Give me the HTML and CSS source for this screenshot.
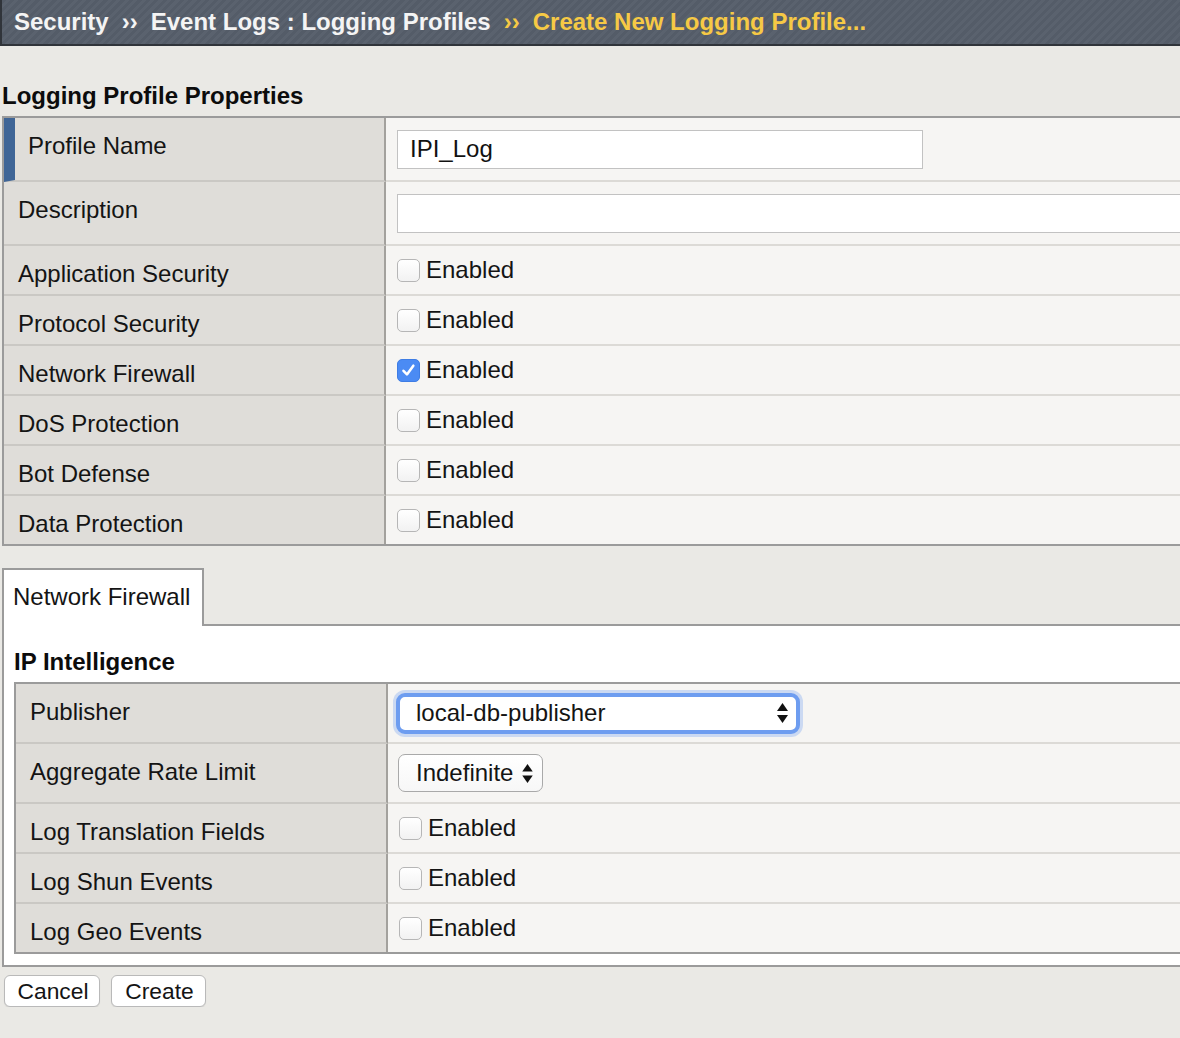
FILE: index.html
```html
<!DOCTYPE html>
<html>
<head>
<meta charset="utf-8">
<title>Create New Logging Profile</title>
<link rel="stylesheet" href="styles.css">
</head>
<body>
<div class="topbar">
  <span class="crumb">Security</span><span class="sep">››</span><span class="crumb">Event Logs : Logging Profiles</span><span class="sep cur">››</span><span class="crumb cur">Create New Logging Profile...</span>
</div>
<main class="content">
  <h2 class="section-title">Logging Profile Properties</h2>
  <div class="props main">
    <div class="row tall">
      <div class="label primary">Profile Name</div>
      <div class="value"><input class="text-input short" type="text" value="IPI_Log"></div>
    </div>
    <div class="row tall">
      <div class="label">Description</div>
      <div class="value"><input class="text-input long" type="text" value=""></div>
    </div>
    <div class="row">
      <div class="label">Application Security</div>
      <div class="value"><span class="opt"><span class="cb"></span>Enabled</span></div>
    </div>
    <div class="row">
      <div class="label">Protocol Security</div>
      <div class="value"><span class="opt"><span class="cb"></span>Enabled</span></div>
    </div>
    <div class="row">
      <div class="label">Network Firewall</div>
      <div class="value"><span class="opt"><span class="cb on"><svg viewBox="0 0 23 23" width="21" height="21"><path d="M6 11.8 L9.8 15.8 L16.8 6.2" fill="none" stroke="#fff" stroke-width="2.8" stroke-linecap="round" stroke-linejoin="round"/></svg></span>Enabled</span></div>
    </div>
    <div class="row">
      <div class="label">DoS Protection</div>
      <div class="value"><span class="opt"><span class="cb"></span>Enabled</span></div>
    </div>
    <div class="row">
      <div class="label">Bot Defense</div>
      <div class="value"><span class="opt"><span class="cb"></span>Enabled</span></div>
    </div>
    <div class="row">
      <div class="label">Data Protection</div>
      <div class="value"><span class="opt"><span class="cb"></span>Enabled</span></div>
    </div>
  </div>

  <div class="tabs">
    <div class="tab">Network Firewall</div>
    <div class="tab-fill"></div>
  </div>
  <div class="panel">
    <h3 class="sub-title">IP Intelligence</h3>
    <div class="props inner">
      <div class="row mid">
        <div class="label">Publisher</div>
        <div class="value">
          <div class="select focus"><span>local-db-publisher</span><svg class="arrows" viewBox="0 0 11 20" width="11" height="20"><polygon points="0,8 5.5,0 11,8" fill="#111"/><polygon points="0,12 11,12 5.5,20" fill="#111"/></svg></div>
        </div>
      </div>
      <div class="row mid">
        <div class="label">Aggregate Rate Limit</div>
        <div class="value">
          <div class="select plain"><span>Indefinite</span><svg class="arrows" viewBox="0 0 11 20" width="11" height="19"><polygon points="0,8 5.5,0 11,8" fill="#111"/><polygon points="0,12 11,12 5.5,20" fill="#111"/></svg></div>
        </div>
      </div>
      <div class="row">
        <div class="label">Log Translation Fields</div>
        <div class="value"><span class="opt"><span class="cb"></span>Enabled</span></div>
      </div>
      <div class="row">
        <div class="label">Log Shun Events</div>
        <div class="value"><span class="opt"><span class="cb"></span>Enabled</span></div>
      </div>
      <div class="row">
        <div class="label">Log Geo Events</div>
        <div class="value"><span class="opt"><span class="cb"></span>Enabled</span></div>
      </div>
    </div>
  </div>

  <div class="actions">
    <button class="btn cancel" type="button">Cancel</button>
    <button class="btn create" type="button">Create</button>
  </div>
</main>
</body>
</html>
```

FILE: styles.css
```css
* { box-sizing: border-box; }

html, body { margin: 0; padding: 0; }

body {
  background: #eae9e5;
  font-family: "Liberation Sans", Arial, sans-serif;
  font-size: 24px;
  line-height: 28px;
  color: #141414;
  overflow: hidden;
}

/* ---------- top breadcrumb bar ---------- */
.topbar {
  height: 46px;
  display: flex;
  align-items: center;
  padding-left: 12px;
  background: repeating-linear-gradient(135deg, #545c68 0 3px, #5a626e 3px 6px);
  border-left: 2px solid #30343a;
  border-bottom: 2px solid #30343a;
  color: #f4f4f4;
  font-weight: bold;
  white-space: nowrap;
}
.sep { margin: 0 13px; }
.cur { color: #f6c945; }

/* ---------- content ---------- */
.content { padding-left: 2px; }

.section-title {
  margin: 36px 0 6px;
  font-size: 24px;
  line-height: 28px;
  font-weight: bold;
  color: #0c0c0c;
}

.props {
  border-top: 2px solid #9b9b9b;
  border-left: 2px solid #9b9b9b;
  border-bottom: 2px solid #9b9b9b;
  width: 100%;
}

.row {
  display: grid;
  grid-template-columns: 382px minmax(0, 1fr);
  height: 50px;
}
.row.tall { height: 64px; }
.row.mid { height: 60px; }
.row:last-child { height: 48px; }

.label {
  background: #dfddd9;
  border-right: 2px solid #a3a19d;
  border-bottom: 2px solid #cac8c4;
  padding: 14px 0 0 14px;
  white-space: nowrap;
}
.label.primary {
  border-left: 11px solid #3f6596;
  padding-left: 13px;
}

.value {
  background: #f6f5f3;
  border-bottom: 2px solid #dcdad6;
  padding: 0 0 0 11px;
  display: flex;
  align-items: center;
  overflow: hidden;
}
.row:last-child .label,
.row:last-child .value { border-bottom: none; }

.text-input {
  height: 39px;
  border: 1px solid #c2c2c2;
  background: #fff;
  font: inherit;
  color: #111;
  padding: 0 12px;
  margin: 0;
  outline: none;
  flex: none;
}
.text-input.short { width: 526px; }
.text-input.long { width: 900px; }

.opt {
  display: flex;
  align-items: center;
  gap: 6px;
  white-space: nowrap;
}

.cb {
  width: 23px;
  height: 23px;
  flex: none;
  border: 1px solid #b6b6b6;
  border-radius: 5px;
  background: linear-gradient(#ffffff, #f2f2f2);
  display: flex;
  align-items: center;
  justify-content: center;
}
.cb.on {
  background: #4b8bf4;
  border-color: #3f7de4;
}

/* ---------- tabs ---------- */
.tabs {
  display: flex;
  height: 58px;
  margin: 22px 0 0 0;
}
.tab {
  width: 202px;
  flex: none;
  border: 2px solid #9b9b9b;
  border-bottom: none;
  background: #fff;
  padding: 13px 0 0 9px;
  white-space: nowrap;
}
.tab-fill {
  flex: 1;
  border-bottom: 2px solid #9b9b9b;
}

.panel {
  background: #fff;
  border-left: 2px solid #9b9b9b;
  border-bottom: 2px solid #9b9b9b;
  padding: 22px 0 11px 10px;
}

.sub-title {
  margin: 0 0 6px;
  font-size: 24px;
  line-height: 28px;
  font-weight: bold;
  color: #0c0c0c;
}

.props.inner .row { grid-template-columns: 372px minmax(0, 1fr); }
.props.inner .label { padding-left: 14px; }
.props.inner .value { padding-left: 11px; }

/* ---------- selects ---------- */
.select {
  display: flex;
  align-items: center;
  background: #fff;
  flex: none;
  white-space: nowrap;
}
.select.focus {
  width: 404px;
  height: 41px;
  margin-left: -3px;
  border: 4px solid #6e9df0;
  border-radius: 9px;
  box-shadow: 0 0 0 3px rgba(140, 176, 240, 0.4);
  padding: 0 8px 0 16px;
  justify-content: space-between;
}
.select.plain {
  width: 145px;
  height: 38px;
  margin-left: -1px;
  border: 1px solid #a9a9a9;
  border-radius: 7px;
  padding: 0 8px 0 17px;
  gap: 9px;
  background: linear-gradient(#ffffff, #f7f7f7);
}
.arrows { flex: none; display: block; }

/* ---------- buttons ---------- */
.actions {
  display: flex;
  gap: 11px;
  margin: 8px 0 0 2px;
}
.btn {
  height: 32px;
  font: inherit;
  font-size: 22.8px;
  line-height: 28px;
  color: #141414;
  background: #fff;
  border: 1px solid #b9b9b9;
  border-radius: 6px;
  padding: 0 0 0 2px;
  box-shadow: 0 1px 1px rgba(0, 0, 0, 0.08);
}
.btn.cancel { width: 96px; }
.btn.create { width: 95px; }
```
